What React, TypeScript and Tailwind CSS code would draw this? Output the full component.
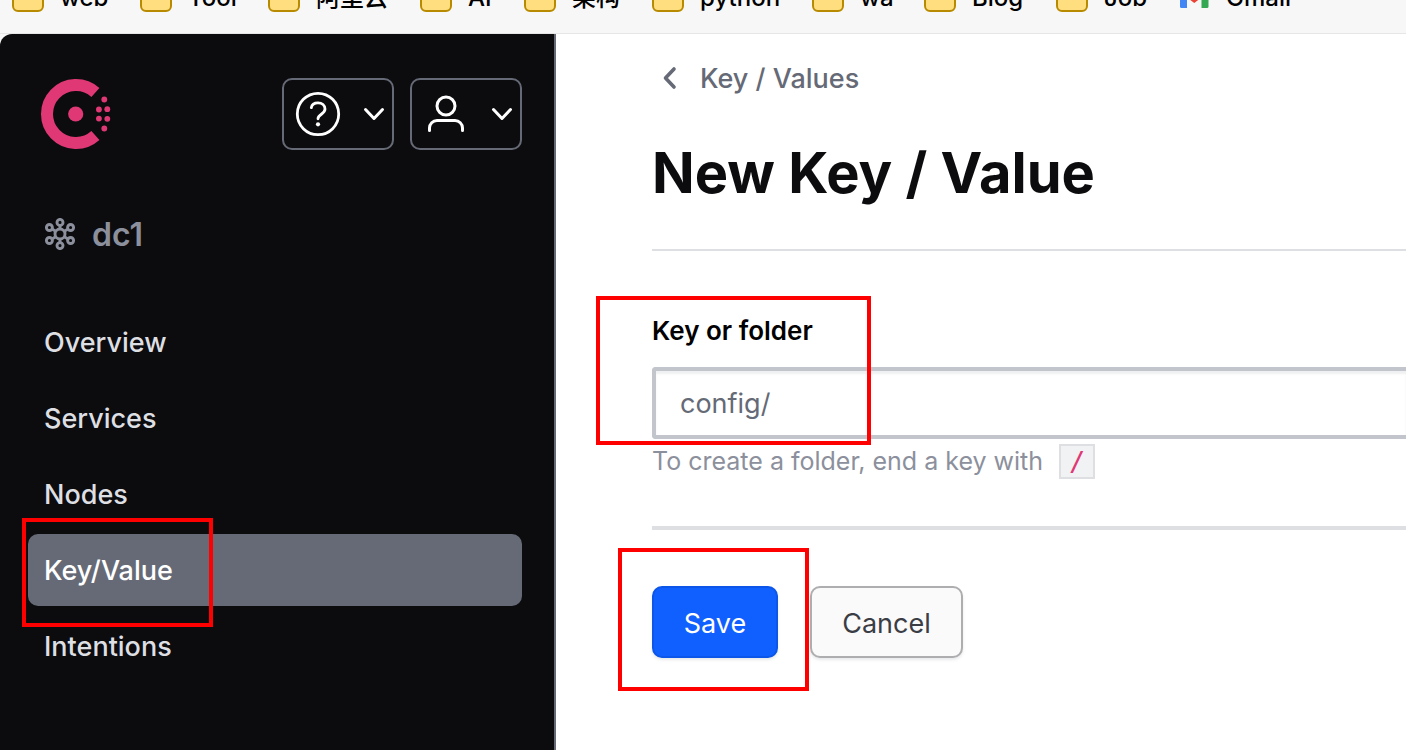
const bookmarks = [
  { name: "web", width: "w-32" },
  { name: "Tool", width: "w-32" },
  { name: "阿里云", width: "w-[152px]" },
  { name: "AI", width: "w-[104px]" },
  { name: "架构", width: "w-32" },
  { name: "python", width: "w-40" },
  { name: "wa", width: "w-28" },
  { name: "Blog", width: "w-[132px]" },
  { name: "Job", width: "w-[124px]" },
];

const navItems = ["Overview", "Services", "Nodes", "Key/Value", "Intentions"];

function GmailIcon() {
  return (
    <svg className="h-6 w-8 shrink-0" viewBox="0 0 32 24" aria-hidden="true">
      <path d="M0 0h7v20H1.500A1.500 1.500 0 0 1 0 18.500z" fill="#4285f4" />
      <path d="M21.500 0h7v18.500a1.500 1.500 0 0 1-1.500 1.500h-5.500z" fill="#34a853" />
      <path d="M7 1l7.250 6 7.250-6v8.500l-7.250 5.500L7 9.500z" fill="#ea4335" />
    </svg>
  );
}

function BookmarksBar() {
  return (
    <nav
      aria-label="Bookmarks"
      className="flex h-[34px] shrink-0 items-end overflow-hidden border-b border-[#e6e6e6] bg-[#f7f7f7] pb-[21px] pl-3 text-2xl font-medium leading-6 text-black"
    >
      {bookmarks.map((b) => (
        <a key={b.name} href="#" className={`flex shrink-0 items-end gap-4 ${b.width}`}>
          <span className="h-[26px] w-8 shrink-0 rounded-md border-2 border-[#b88a00] bg-[#ffde80]" />
          <span className="whitespace-nowrap pb-0.5">{b.name}</span>
        </a>
      ))}
      <a href="#" className="flex shrink-0 items-end gap-[14px]">
        <GmailIcon />
        <span className="pb-0.5">Gmail</span>
      </a>
    </nav>
  );
}

function ConsulLogo() {
  return (
    <svg className="h-[72px] w-[72px]" viewBox="0 0 72 72" role="img" aria-label="Consul">
      <g fill="#e03875">
        <circle cx="35.700" cy="36" r="7.600" />
        <circle cx="64.300" cy="21.500" r="2.900" />
        <circle cx="58.900" cy="31.500" r="2.900" />
        <circle cx="67.300" cy="31.200" r="2.900" />
        <circle cx="58.900" cy="40.600" r="2.900" />
        <circle cx="67.300" cy="40.800" r="2.900" />
        <circle cx="64.300" cy="50.500" r="2.900" />
      </g>
      <path d="M55.400 14.450A29 29 0 1 0 55.400 57.550" fill="none" stroke="#e03875" strokeWidth="12" />
    </svg>
  );
}

function HelpIcon() {
  return (
    <svg className="size-12" viewBox="0 0 48 48" fill="none" stroke="currentColor" strokeWidth="2.800" strokeLinecap="round" aria-hidden="true">
      <circle cx="24" cy="24" r="20.700" />
      <path d="M17.300 17.700C17.800 14.800 20.500 12.900 24 12.900c4 0 7 2.500 7 6.200 0 5-7 5.200-7 9.700" />
      <circle cx="24" cy="34.300" r="2.100" fill="currentColor" stroke="none" />
    </svg>
  );
}

function UserIcon() {
  return (
    <svg className="size-12" viewBox="0 0 48 48" fill="none" stroke="currentColor" strokeWidth="3" strokeLinecap="round" aria-hidden="true">
      <circle cx="24" cy="16" r="9" />
      <path d="M7.500 40.500V38a7.500 7.500 0 0 1 7.500-7.500h18a7.500 7.500 0 0 1 7.500 7.500v2.500" />
    </svg>
  );
}

function ChevronDown() {
  return (
    <svg className="h-6 w-6" viewBox="0 0 24 24" fill="none" stroke="currentColor" strokeWidth="3" strokeLinecap="round" strokeLinejoin="round" aria-hidden="true">
      <path d="M3.500 7.500 12 16.500l8.500-9" />
    </svg>
  );
}

function NetworkIcon() {
  return (
    <svg className="size-8" viewBox="0 0 32 32" fill="none" stroke="currentColor" strokeWidth="2.900" aria-hidden="true">
      <circle cx="16" cy="16" r="5" />
      <circle cx="16" cy="4.400" r="3" />
      <circle cx="16" cy="27.600" r="3" />
      <circle cx="5.400" cy="9.500" r="3" />
      <circle cx="26.600" cy="9.500" r="3" />
      <circle cx="5.400" cy="22.500" r="3" />
      <circle cx="26.600" cy="22.500" r="3" />
      <path d="M16 7.400V11M16 21v3.600M8 11l3.700 2.300M24 11l-3.700 2.300M8 21l3.700-2.300M24 21l-3.700-2.300" />
    </svg>
  );
}

function Sidebar() {
  return (
    <aside className="flex w-[556px] shrink-0 flex-col rounded-tl-xl border-r-2 border-[#656a76] bg-[#0c0c0e] pl-7 pr-8 pt-11">
      <div className="flex items-center justify-between pl-3">
        <a href="#">
          <ConsulLogo />
        </a>
        <div className="flex gap-4 text-white">
          <button type="button" aria-label="Help" className="flex h-[72px] w-28 items-center justify-between rounded-[10px] border-2 border-[#656a76] pl-2.5 pr-1.5">
            <HelpIcon />
            <ChevronDown />
          </button>
          <button type="button" aria-label="Account" className="flex h-[72px] w-28 items-center justify-between rounded-[10px] border-2 border-[#656a76] pl-2.5 pr-1.5">
            <UserIcon />
            <ChevronDown />
          </button>
        </div>
      </div>
      <div className="mt-12 flex h-[72px] items-center gap-4 pl-4 text-[32px] font-semibold text-[#8c909c]">
        <NetworkIcon />
        <span className="pt-0.5">dc1</span>
      </div>
      <nav aria-label="Main" className="mt-9 flex flex-col gap-1 text-[27px] font-medium">
        {navItems.map((item) =>
          item === "Key/Value" ? (
            <div key={item} className="relative">
              <a href="#" aria-current="page" className="flex h-[72px] items-center rounded-[10px] bg-[#656a76] pl-4 pt-0.5 text-white">
                {item}
              </a>
              <span className="pointer-events-none absolute -left-1.5 -top-4 h-[109px] w-[191px] border-4 border-[#ff0000]" />
            </div>
          ) : (
            <a key={item} href="#" className="flex h-[72px] items-center rounded-[10px] pl-4 pt-0.5 text-[#dedfe3]">
              {item}
            </a>
          )
        )}
      </nav>
    </aside>
  );
}

function KeyForm() {
  return (
    <form onSubmit={(e) => e.preventDefault()}>
      <div className="relative flex flex-col border-b-4 border-[#dedfe3] pb-[47px] pt-16">
        <label htmlFor="key" className="text-[26px] font-semibold leading-8 text-black">
          Key or folder
        </label>
        <input
          id="key"
          type="text"
          defaultValue="config/"
          className="mt-5 h-[72px] w-full rounded-l border-4 border-r-0 border-[#c2c5cb] bg-white px-6 text-[27px] text-[#656a76] shadow-[inset_0_3px_2px_rgba(101,106,118,0.1)] outline-none"
        />
        <p className="mt-1 flex items-center gap-4 text-[25px] leading-9 text-[#8c909c]">
          To create a folder, end a key with
          <code className="flex h-[35px] w-9 items-center justify-center border-2 border-[#dedfe3] bg-[#f1f2f3] font-['DejaVu_Sans_Mono',monospace] text-[27px] leading-none text-[#e03875]">
            /
          </code>
        </p>
        <span className="pointer-events-none absolute -left-14 top-[45px] h-[149px] w-[275px] border-4 border-[#ff0000]" />
      </div>
      <div className="flex gap-8 pt-14 text-[27px]">
        <div className="relative">
          <button type="submit" className="h-[72px] w-[126px] rounded-[10px] border-2 border-[#0c56e9] bg-[#1060ff] pt-1 text-white shadow-[0_2px_3px_rgba(101,106,118,0.15)]">
            Save
          </button>
          <span className="pointer-events-none absolute -left-[34px] -top-[38px] h-[143px] w-[191px] border-4 border-[#ff0000]" />
        </div>
        <button type="button" className="h-[72px] w-[153px] rounded-[10px] border-2 border-[#aeaeb0] bg-[#fafafa] pt-1 text-[#3b3d45] shadow-[0_2px_3px_rgba(101,106,118,0.15)]">
          Cancel
        </button>
      </div>
    </form>
  );
}

export default function App() {
  return (
    <div className="flex min-h-screen flex-col overflow-hidden bg-[#f7f7f7] font-[Inter,'Noto_Sans_CJK_SC',sans-serif]">
      <BookmarksBar />
      <div className="flex grow">
        <Sidebar />
        <main className="min-w-0 grow bg-white pl-24 pt-6">
          <nav aria-label="Breadcrumb">
            <a href="#" className="flex h-[42px] items-center gap-4 text-[27px] font-medium text-[#656a76]">
              <svg className="size-8" viewBox="0 0 32 32" fill="none" stroke="currentColor" strokeWidth="3.600" strokeLinecap="round" strokeLinejoin="round" aria-hidden="true">
                <path d="M22 6l-8.500 9L22 24" />
              </svg>
              Key / Values
            </a>
          </nav>
          <header className="border-b-2 border-[#dedfe3] pb-[38px] pt-[35px]">
            <h1 className="text-[56px] font-bold leading-[76px] text-[#0c0c0e]">New Key / Value</h1>
          </header>
          <KeyForm />
        </main>
      </div>
    </div>
  );
}
